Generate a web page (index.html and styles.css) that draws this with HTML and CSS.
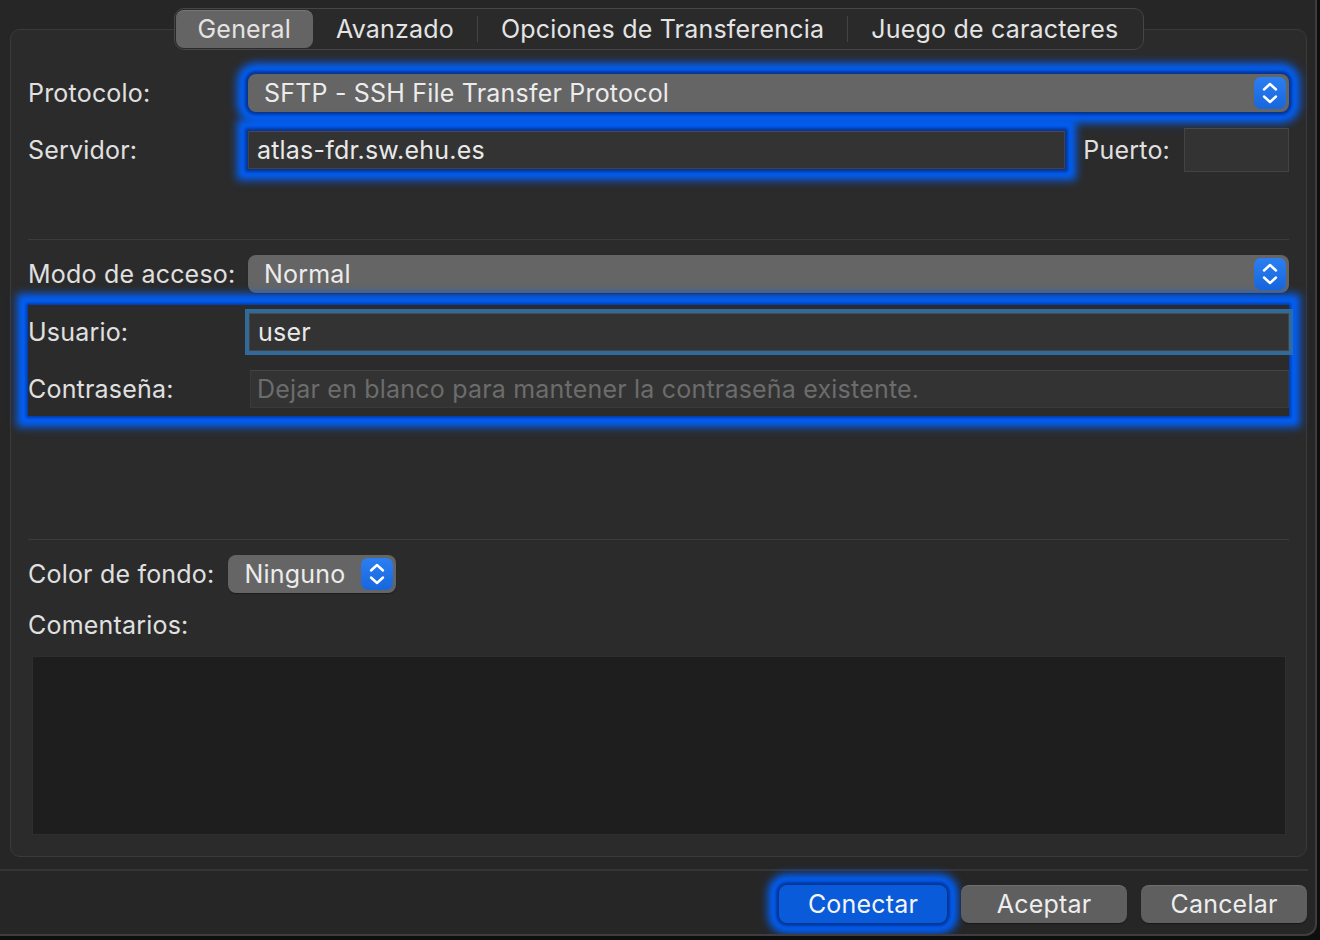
FILE: index.html
```html
<!DOCTYPE html>
<html lang="es">
<head>
<meta charset="utf-8">
<title>Gestor de sitios</title>
<link rel="stylesheet" href="styles.css">
</head>
<body>
<div class="window">
  <div class="tabview">
    <div class="tabs">
      <span class="tab selected">General</span>
      <span class="tab">Avanzado</span>
      <span class="divider"></span>
      <span class="tab">Opciones de Transferencia</span>
      <span class="divider"></span>
      <span class="tab">Juego de caracteres</span>
    </div>
    <div class="form">
      <div class="grid first">
        <span class="label">Protocolo:</span>
        <div class="select glow">
          <span class="value">SFTP - SSH File Transfer Protocol</span>
          <span class="stepper"><svg width="32" height="32" viewBox="0 0 32 32"><path d="M10 12.5 L16 7 L22 12.5 M10 19.5 L16 25 L22 19.5" fill="none" stroke="#fff" stroke-width="2.4" stroke-linecap="round" stroke-linejoin="round"/></svg></span>
        </div>
        <span class="label">Servidor:</span>
        <div class="server-row">
          <div class="input server glow">atlas-fdr.sw.ehu.es</div>
          <span class="label port-label">Puerto:</span>
          <div class="input port"></div>
        </div>
      </div>
      <div class="separator"></div>
      <div class="grid">
        <span class="label">Modo de acceso:</span>
        <div class="select">
          <span class="value">Normal</span>
          <span class="stepper"><svg width="32" height="32" viewBox="0 0 32 32"><path d="M10 12.5 L16 7 L22 12.5 M10 19.5 L16 25 L22 19.5" fill="none" stroke="#fff" stroke-width="2.4" stroke-linecap="round" stroke-linejoin="round"/></svg></span>
        </div>
      </div>
      <div class="grid creds">
        <span class="label">Usuario:</span>
        <div class="input focus">user</div>
        <span class="label">Contraseña:</span>
        <div class="input placeholder">Dejar en blanco para mantener la contraseña existente.</div>
      </div>
      <div class="separator lower"></div>
      <div class="color-row">
        <span class="label">Color de fondo:</span>
        <div class="select small">
          <span class="value">Ninguno</span>
          <span class="stepper"><svg width="32" height="32" viewBox="0 0 32 32"><path d="M10 12.5 L16 7 L22 12.5 M10 19.5 L16 25 L22 19.5" fill="none" stroke="#fff" stroke-width="2.4" stroke-linecap="round" stroke-linejoin="round"/></svg></span>
        </div>
      </div>
      <span class="label comments-label">Comentarios:</span>
      <div class="textarea"></div>
    </div>
  </div>
  <div class="footer-line"></div>
  <div class="footer">
    <button class="btn primary">Conectar</button>
    <button class="btn">Aceptar</button>
    <button class="btn">Cancelar</button>
  </div>
</div>
</body>
</html>
```
FILE: styles.css
```css
* { box-sizing: border-box; }
html, body { margin: 0; padding: 0; }
body {
  width: 1320px;
  height: 940px;
  overflow: hidden;
  background: #0e0e0e;
  font-family: Inter, "Noto Sans", "Liberation Sans", sans-serif;
  font-size: 25px;
  letter-spacing: 0.2px;
  color: #e2e2e2;
}
.window {
  width: 1317px;
  height: 936px;
  background: #262626;
  border-right: 2px solid #3e3e3e;
  border-bottom: 2px solid #3e3e3e;
  border-bottom-right-radius: 12px;
  display: flex;
  flex-direction: column;
  overflow: hidden;
}
.tabview {
  margin: 29px 0 0 10px;
  width: 1297px;
  height: 828px;
  border: 1px solid #3a3a3a;
  border-radius: 10px;
  background: #2b2b2b;
  display: flex;
  flex-direction: column;
}
.tabs {
  align-self: center;
  margin-top: -22px;
  height: 42px;
  display: flex;
  align-items: center;
  padding: 0 1px;
  background: #2a2a2a;
  border: 1px solid #464646;
  border-radius: 10px;
}
.tab {
  padding: 0 23px;
  height: 38px;
  line-height: 38px;
  color: #e4e4e4;
  white-space: nowrap;
}
.tab.selected {
  padding: 0 22px;
  background: #646464;
  border-radius: 8px;
  box-shadow: inset 0 1px 0 rgba(255,255,255,0.12), 0 0 0 0.5px #2a2a2a;
}
.divider {
  width: 1px;
  height: 26px;
  background: #444;
}
.form {
  flex: 1;
  display: flex;
  flex-direction: column;
  padding: 24px 17px 21px 17px;
}
.grid {
  display: grid;
  grid-template-columns: 220px 1fr;
  row-gap: 19px;
  align-items: center;
}
.grid.first { row-gap: 16px; }
.label {
  color: #e0e0e0;
  white-space: nowrap;
  line-height: 30px;
}
.select {
  height: 38px;
  background: #656565;
  border-radius: 8px;
  display: flex;
  align-items: center;
  justify-content: space-between;
  padding: 0 3px 0 16px;
  color: #ececec;
  box-shadow: 0 1px 1px rgba(0,0,0,0.35);
}
.stepper {
  width: 32px;
  height: 32px;
  border-radius: 7px;
  background: linear-gradient(#2b7ff2, #1866dc);
  display: flex;
}
.input {
  height: 38px;
  background: #333333;
  border: 1px solid #434343;
  border-top-color: #4a4a4a;
  display: flex;
  align-items: center;
  padding-left: 8px;
  color: #e9e9e9;
  white-space: nowrap;
  overflow: hidden;
}
.glow {
  box-shadow: 0 0 3px 3px rgba(6, 50, 140, 0.95), 0 0 8px 11px #0062ff;
}
.server-row {
  display: flex;
  align-items: center;
}
.input.server { flex: 1; }
.port-label { margin: 0 14px 0 18px; }
.input.port {
  width: 105px;
  height: 44px;
}
.separator {
  height: 1px;
  background: #3c3c3c;
  margin: 67px 0 15px;
}
.separator.lower { margin: 123px 0 15px; }
.creds {
  margin-top: 12px;
  padding: 8px 0;
  box-shadow: 0 0 3px 2px rgba(6, 50, 140, 0.85), 0 0 8px 11px #0062ff;
}
.input.focus {
  margin-left: 1px;
  box-shadow: 0 0 0 4px rgba(47, 110, 160, 0.95);
}
.input.placeholder {
  margin-left: 2px;
  color: #6c6c6c;
  border-color: #3a3a3a;
  border-top-color: #444;
  padding-left: 6px;
}
.color-row {
  display: flex;
  align-items: center;
  gap: 14px;
}
.select.small { width: 168px; }
.comments-label { margin-top: 17px; }
.textarea {
  margin: 16px 3px 0 4px;
  flex: 1;
  background: #1e1e1e;
  border: 1px solid #2e2e2e;
}
.footer-line {
  margin-top: 12px;
  height: 2px;
  width: 1308px;
  background: #353535;
}
.footer {
  display: flex;
  justify-content: flex-end;
  gap: 14px;
  padding: 14px 8px 0 0;
}
.btn {
  width: 166px;
  height: 38px;
  border: none;
  border-radius: 8px;
  background: #5f5f5f;
  color: #eeeeee;
  font-family: inherit;
  font-size: 25px;
  letter-spacing: 0.2px;
  box-shadow: inset 0 1px 0 rgba(255,255,255,0.1), 0 1px 1px rgba(0,0,0,0.4);
}
.btn.primary {
  width: 168px;
  background: #0a5bd9;
  color: #f4f4f4;
  box-shadow: 0 0 3px 3px rgba(6, 50, 140, 0.95), 0 0 8px 11px #0062ff;
}
```
